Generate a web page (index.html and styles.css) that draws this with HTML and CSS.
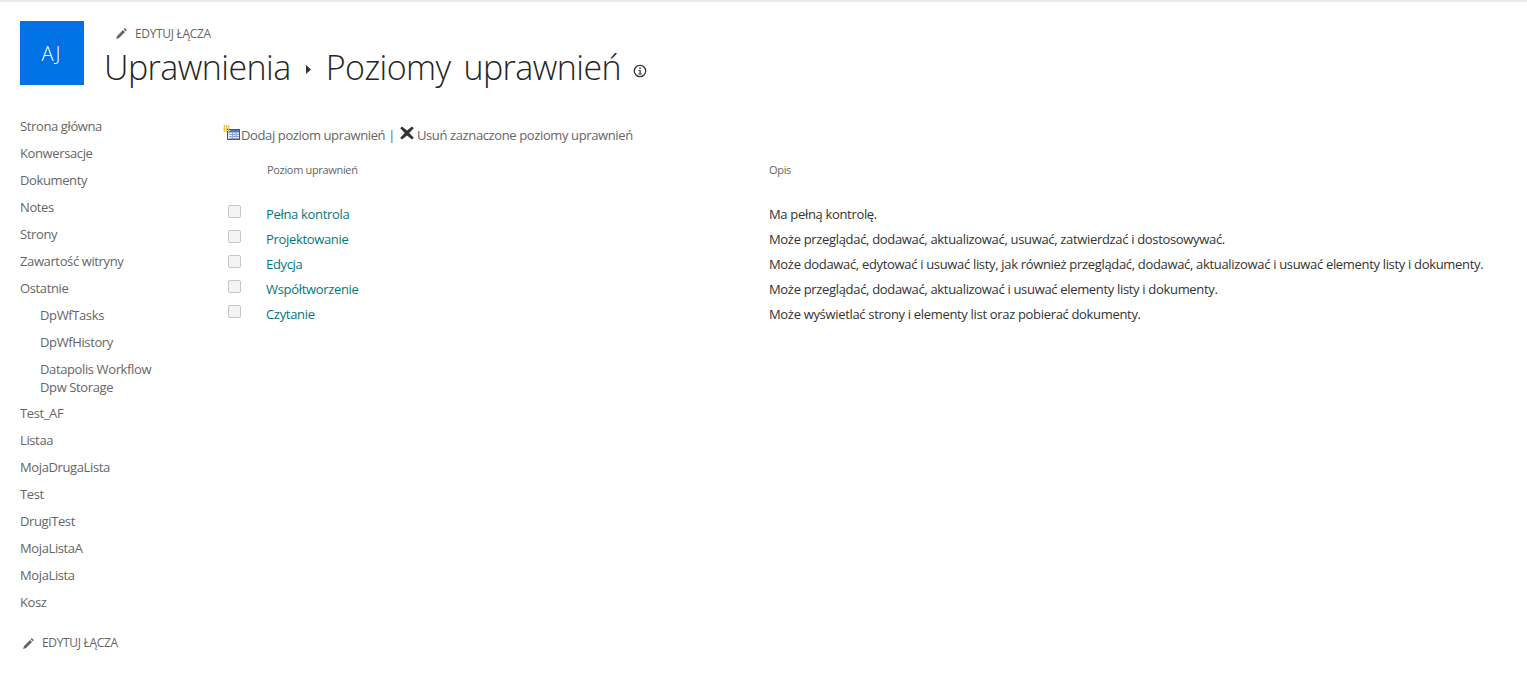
FILE: index.html
```html
<!DOCTYPE html>
<html lang="pl">
<head>
  <meta charset="UTF-8">
  <title>Poziomy uprawnień</title>
  <link rel="stylesheet" href="styles.css">
</head>
<body>

  <header class="page-header">
    <div class="site-logo">AJ</div>
    <div class="title-block">
      <a href="#" class="edit-links">
        <svg class="pencil" viewBox="0 0 14 14"><path d="M10.6 1.2l2.2 2.2-1.3 1.3-2.2-2.2zM8.6 3.2l2.2 2.2-6.4 6.4-3.2 1 1-3.2z"/></svg>
        <span>EDYTUJ ŁĄCZA</span>
      </a>
      <h1 class="page-title">
        <span>Uprawnienia</span>
        <svg class="crumb-arrow" viewBox="0 0 5 9"><path d="M0 0l5 4.5-5 4.5z"/></svg>
        <span>Poziomy uprawnień</span>
        <svg class="info-icon" viewBox="0 0 14 14"><circle cx="7" cy="7" r="5.7"/><path class="info-mark" d="M5.6 6h2.1v3.4h1v1H5.5v-1h1V7h-.9zM6.3 3.6h1.4V5H6.3z"/></svg>
      </h1>
    </div>
  </header>

  <div class="page-body">
    <nav class="side-nav">
      <a href="#">Strona główna</a>
      <a href="#">Konwersacje</a>
      <a href="#">Dokumenty</a>
      <a href="#">Notes</a>
      <a href="#">Strony</a>
      <a href="#">Zawartość witryny</a>
      <a href="#">Ostatnie</a>
      <a href="#" class="sub">DpWfTasks</a>
      <a href="#" class="sub">DpWfHistory</a>
      <a href="#" class="sub two-line">Datapolis Workflow Dpw Storage</a>
      <a href="#">Test_AF</a>
      <a href="#">Listaa</a>
      <a href="#">MojaDrugaLista</a>
      <a href="#">Test</a>
      <a href="#">DrugiTest</a>
      <a href="#">MojaListaA</a>
      <a href="#">MojaLista</a>
      <a href="#">Kosz</a>
      <a href="#" class="edit-links nav-edit">
        <svg class="pencil" viewBox="0 0 14 14"><path d="M10.6 1.2l2.2 2.2-1.3 1.3-2.2-2.2zM8.6 3.2l2.2 2.2-6.4 6.4-3.2 1 1-3.2z"/></svg>
        <span>EDYTUJ ŁĄCZA</span>
      </a>
    </nav>

    <main class="content">
      <div class="toolbar">
        <a href="#" class="tool">
          <svg class="add-icon" viewBox="0 0 18 15">
            <rect x="4.5" y="4.5" width="12" height="10" fill="#e6edf7" stroke="#3d5a86"/>
            <rect x="5" y="5" width="11" height="2.5" fill="#4a7cc0"/>
            <path d="M6 9.5h10M6 11.5h10M6 13.5h10M9.5 8v6M13 8v6" stroke="#8fa5c6"/>
            <path d="M0 1h7v1H0zM0 3h7v1H0zM0 5h7v1H0z" fill="#f0d870"/>
            <path d="M1 0h1v7H1zM3 0h1v7H3zM5 0h1v7H5z" fill="#e6c34a"/>
          </svg>
          <span>Dodaj poziom uprawnień</span>
        </a>
        <span class="sep">|</span>
        <a href="#" class="tool">
          <svg class="del-icon" viewBox="0 0 14 14"><path d="M2 .4L7 4.6 12 .4l1.8 1.8L9.2 7l4.6 4.8-1.8 1.8L7 9.4 2 13.6.2 11.8 4.8 7 .2 2.2z"/></svg>
          <span>Usuń zaznaczone poziomy uprawnień</span>
        </a>
      </div>

      <table class="levels">
        <thead>
          <tr>
            <th class="col-check"></th>
            <th class="col-name">Poziom uprawnień</th>
            <th>Opis</th>
          </tr>
        </thead>
        <tbody>
          <tr>
            <td><span class="check"></span></td>
            <td><a href="#">Pełna kontrola</a></td>
            <td>Ma pełną kontrolę.</td>
          </tr>
          <tr>
            <td><span class="check"></span></td>
            <td><a href="#">Projektowanie</a></td>
            <td>Może przeglądać, dodawać, aktualizować, usuwać, zatwierdzać i dostosowywać.</td>
          </tr>
          <tr>
            <td><span class="check"></span></td>
            <td><a href="#">Edycja</a></td>
            <td>Może dodawać, edytować i usuwać listy, jak również przeglądać, dodawać, aktualizować i usuwać elementy listy i dokumenty.</td>
          </tr>
          <tr>
            <td><span class="check"></span></td>
            <td><a href="#">Współtworzenie</a></td>
            <td>Może przeglądać, dodawać, aktualizować i usuwać elementy listy i dokumenty.</td>
          </tr>
          <tr>
            <td><span class="check"></span></td>
            <td><a href="#">Czytanie</a></td>
            <td>Może wyświetlać strony i elementy list oraz pobierać dokumenty.</td>
          </tr>
        </tbody>
      </table>
    </main>
  </div>

</body>
</html>
```

FILE: styles.css
```css
/* --- Basic Setup --- */
:root {
  --text-color: #444444;
  --link-color: #03787c;
  --muted-color: #666666;
  --title-color: #262626;
  --logo-blue: #0072e6;
  --base-font-size: 13px;
}

body {
  margin: 0;
  padding: 0;
  background-color: #ffffff;
  color: var(--text-color);
  font-family: "Open Sans", "Noto Sans", sans-serif;
  font-size: var(--base-font-size);
  letter-spacing: -0.325px;
  border-top: 2px solid #eaeaea;
  overflow: hidden;
}

a {
  color: inherit;
  text-decoration: none;
}

/* --- Header --- */
.page-header {
  display: flex;
  padding: 19px 0 0 20px;
  height: 82px;
}

.site-logo {
  width: 64px;
  height: 64px;
  background-color: var(--logo-blue);
  color: #ffffff;
  font-size: 20px;
  font-weight: 300;
  letter-spacing: 2px;
  display: flex;
  justify-content: center;
  align-items: center;
  flex-shrink: 0;
}

.title-block {
  margin-left: 20px;
}

.edit-links {
  display: flex;
  align-items: center;
  font-size: 12px;
  color: var(--muted-color);
  letter-spacing: -0.33px;
}

.title-block .edit-links {
  padding: 3px 0 0 11px;
  height: 18px;
}

.pencil {
  width: 13px;
  height: 13px;
  margin-right: 7px;
  fill: #666666;
}

.page-title {
  margin: 2px 0 0;
  display: flex;
  align-items: center;
  font-size: 34px;
  font-weight: 300;
  line-height: 46px;
  color: var(--title-color);
  letter-spacing: -0.55px;
  word-spacing: 4.5px;
}

.crumb-arrow {
  width: 5px;
  height: 9px;
  margin: 5px 15px 0 15px;
  fill: #333333;
}

.info-icon {
  width: 14px;
  height: 14px;
  margin: 7px 0 0 12px;
  fill: none;
  stroke: #333333;
  stroke-width: 1.3;
}

.info-mark {
  fill: #333333;
  stroke: none;
}

/* --- Body --- */
.page-body {
  display: flex;
}

.side-nav {
  width: 223px;
  padding: 11px 0 0 20px;
  box-sizing: border-box;
  flex-shrink: 0;
  letter-spacing: -0.38px;
}

.side-nav a {
  display: block;
  padding: 3px 0 6px;
  line-height: 18px;
  color: var(--muted-color);
}

.side-nav a.sub {
  padding-left: 20px;
  padding-right: 60px;
}

.side-nav a.two-line {
  padding-bottom: 5px;
}

.side-nav a.nav-edit {
  display: flex;
  padding: 17px 0 0 2px;
  font-size: 12px;
  letter-spacing: -0.33px;
}

.content {
  flex: 1;
  padding-top: 22px;
}

/* --- Toolbar --- */
.toolbar {
  display: flex;
  align-items: center;
  height: 20px;
  color: var(--muted-color);
  letter-spacing: -0.38px;
}

.tool {
  display: flex;
  align-items: center;
}

.add-icon {
  width: 18px;
  height: 15px;
  margin: -5px 0 0 0;
}

.sep {
  margin: 0 5px 0 3px;
}

.del-icon {
  width: 14px;
  height: 14px;
  margin: -5px 3px 0 0;
  fill: #333333;
}

/* --- Levels table --- */
.levels {
  border-collapse: collapse;
  margin-top: 17px;
}

.levels th {
  padding: 0 0 24px;
  height: 32px;
  box-sizing: border-box;
  font-size: 11px;
  font-weight: 400;
  color: var(--muted-color);
  text-align: left;
  letter-spacing: -0.33px;
}

.levels td {
  padding: 0;
  height: 25px;
  vertical-align: middle;
}

.levels tbody td:nth-child(3) {
  color: #333333;
}

.levels td a {
  margin-left: -1px;
  color: var(--link-color);
}

.col-check {
  width: 44px;
}

.col-name {
  width: 502px;
}

.check {
  display: block;
  width: 11px;
  height: 11px;
  margin: -4px 0 0 5px;
  background-color: #f4f4f4;
  border: 1px solid #c6c6c6;
  border-radius: 2px;
}
```
